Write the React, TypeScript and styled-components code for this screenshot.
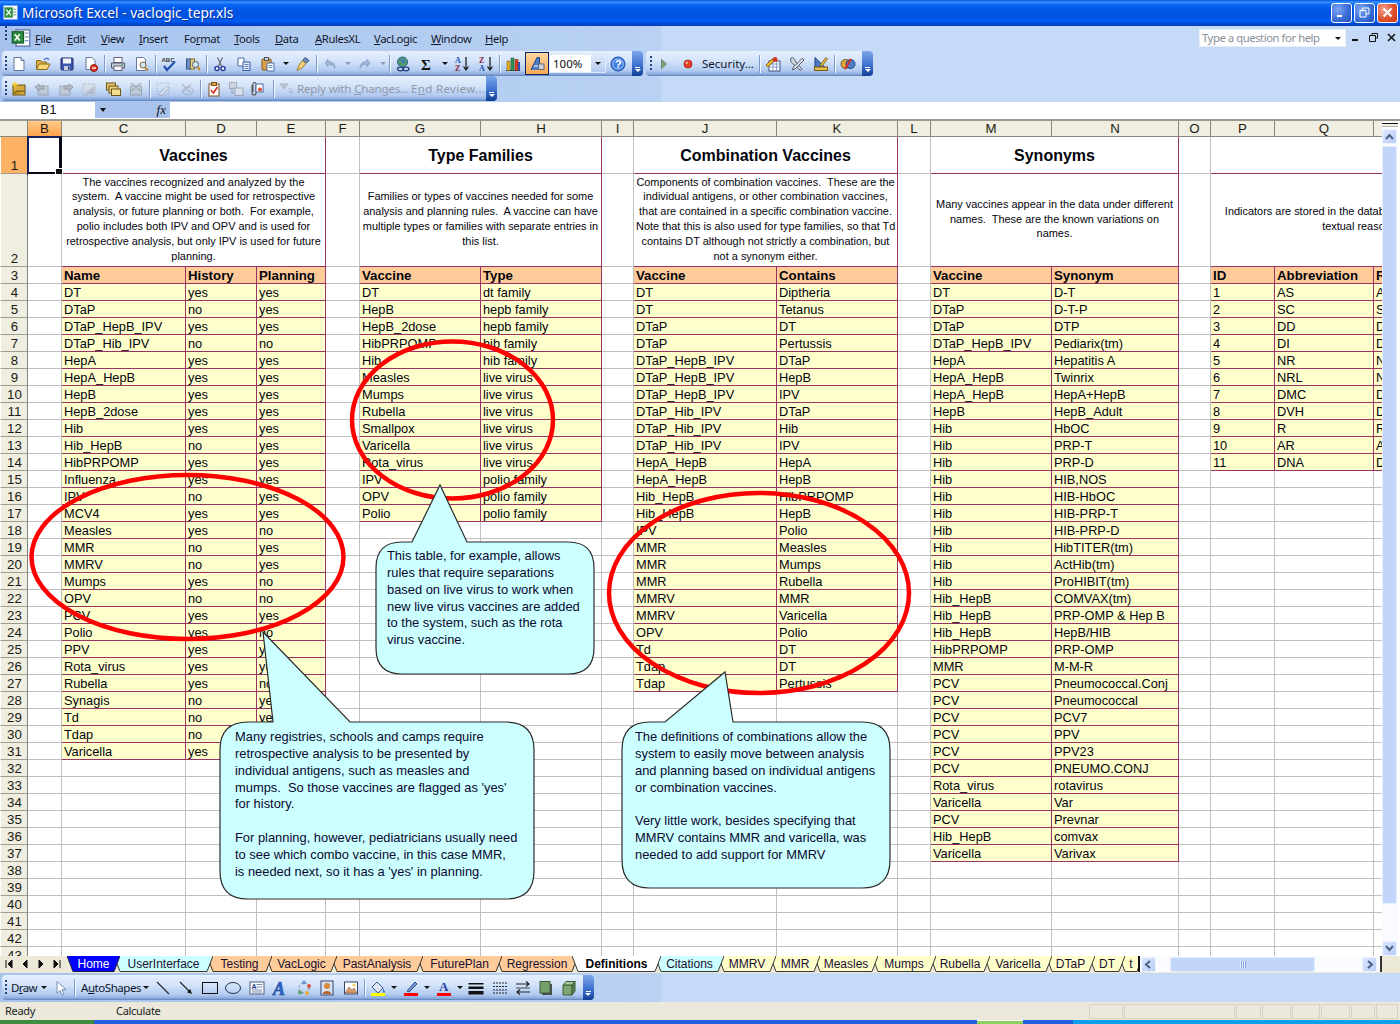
import React from 'react';
import styled, { createGlobalStyle } from 'styled-components';

const Global = createGlobalStyle`
  html, body { margin: 0; padding: 0; background: #fff; overflow: hidden; }
  * { box-sizing: border-box; }
`;

const UI = `"Noto Sans", "DejaVu Sans", sans-serif`;
const SHEET = `"Liberation Sans", Arial, sans-serif`;

const Page = styled.div`
  position: relative; width: 1400px; height: 1024px; overflow: hidden;
  display: flex; flex-direction: column; font-family: ${UI}; color: #111;
`;

/* ---------- title bar ---------- */
const TitleBar = styled.div`
  height: 26px; flex: none; display: flex; align-items: center; padding: 0 2px 1px 3px; color: #fff;
  background: linear-gradient(180deg,#0051e0 0,#3a94ff 8%,#0c6af5 16%,#0056e8 36%,#0052e0 62%,#005cf2 82%,#0048cf 92%,#003cb6 100%);
`;
const TitleText = styled.span`
  flex: 1; margin-left: 4px; font: 400 13.7px/18px "Noto Sans", sans-serif; text-shadow: 1px 1px 0 #0a2f9a;
`;
const WinBtn = styled.div<{ $red?: boolean }>`
  width: 21px; height: 20px; margin-left: 2px; border: 1px solid #fff; border-radius: 3px; display: flex; align-items: center; justify-content: center;
  background: ${p => p.$red ? 'radial-gradient(circle at 30% 30%,#f2a58e,#e0502b 55%,#c8381a)' : 'radial-gradient(circle at 30% 30%,#7ea6f2,#3c6fd8 55%,#2350bd)'};
`;

/* ---------- command bars ---------- */
const Dock = styled.div<{ $h: number }>`
  height: ${p => p.$h}px; flex: none; display: flex; align-items: flex-start;
  background: linear-gradient(90deg,#a7c3ed 0,#b9d2f3 660px,#c4daf6 662px,#c4daf6 100%);
`;
const Grip = styled.span<{ $ml?: number }>`
  flex: none; width: 2px; height: 16px; margin-left: ${p => p.$ml ?? 3}px;
  background: repeating-linear-gradient(180deg,#27437f 0 2px,transparent 2px 4px);
`;
const MenuIcon = styled.span`
  flex: none; width: 28px; height: 24px; display: flex; align-items: center; justify-content: center;
  svg { width: 20px; height: 20px; }
`;
const MenuItem = styled.span<{ $w: number }>`
  flex: none; width: ${p => p.$w}px; font: 400 11.2px/25px ${UI}; letter-spacing: -0.35px; color: #10172b;
  u { text-decoration-thickness: 1px; text-underline-offset: 1px; }
`;
const HelpBox = styled.div`
  margin-left: auto; margin-top: 3px; width: 147px; height: 18px; background: #fff; display: flex; align-items: center; justify-content: space-between;
  font: 400 11.3px/16px ${UI}; letter-spacing: -0.45px; color: #8a8f98; padding: 0 2px; white-space: nowrap;
  border: 1px solid #e8eefa;
`;
const DocCtl = styled.div`
  width: 54px; height: 22px; display: flex; align-items: center; justify-content: space-around; padding-left: 2px;
`;
const Toolbar = styled.div<{ $ml?: number; $mt?: number }>`
  flex: none; height: 25px; margin-left: ${p => p.$ml ?? 2}px; margin-top: ${p => p.$mt ?? 0}px; display: flex; align-items: center;
  border-radius: 4px; overflow: hidden; position: relative;
  background: linear-gradient(180deg,#e6f0fe 0,#d3e3f9 40%,#b3cbf1 78%,#8fadde 92%,#5c7fb9 100%);
`;
const Tool = styled.span<{ $w?: number; $off?: boolean; $on?: boolean }>`
  flex: none; width: ${p => p.$w ?? 24}px; height: 23px; display: flex; align-items: center; justify-content: center;
  ${p => p.$off && 'filter: grayscale(1) opacity(.5);'}
  ${p => p.$on && 'background: linear-gradient(180deg,#ffd9a6,#fba84e); outline: 1px solid #0a2468; outline-offset: -1px;'}
  svg { width: 16px; height: 16px; display: block; }
`;
const Sep = styled.span<{ $l?: number; $r?: number }>`
  flex: none; width: 1px; height: 18px; margin: 0 ${p => p.$r ?? 1}px 0 ${p => p.$l ?? 1}px; background: #7b9bcf; box-shadow: 1px 0 0 #f4f8ff;
`;
const Drop = styled.span<{ $w?: number; $off?: boolean }>`
  flex: none; width: ${p => p.$w ?? 11}px; display: flex; justify-content: center;
  &::before { content: ''; border: 3px solid transparent; border-top: 3px solid ${p => p.$off ? '#8a9bb8' : '#111'}; border-bottom: 0; }
`;
const Label = styled.span<{ $w?: number; $off?: boolean; $ml?: number; $ls?: number }>`
  flex: none; width: ${p => (p.$w ? p.$w + 'px' : 'auto')}; margin-left: ${p => p.$ml ?? 0}px; font: 400 11.5px/23px ${UI}; white-space: pre;
  letter-spacing: ${p => p.$ls ?? 0}px; color: ${p => p.$off ? '#8f98a8' : '#10172b'};
`;
const Chevron = styled.span<{ $ml?: number }>`
  flex: none; width: 11px; height: 25px; margin-left: ${p => p.$ml ?? 2}px; display: flex; flex-direction: column; align-items: center; justify-content: flex-end; padding-bottom: 4px; gap: 1px;
  background: linear-gradient(180deg,#7da6ea 0,#3f73cf 55%,#123f96 100%);
  i { display: block; width: 5px; height: 1px; background: #fff; }
  b { display: block; border: 3px solid transparent; border-top: 3px solid #fff; border-bottom: 0; }
`;
const ZoomBox = styled.span`
  flex: none; width: 57px; height: 19px; background: #fff; border: 1px solid #dfe8f8; display: flex; align-items: center; justify-content: space-between;
  font: 400 11.5px/17px ${UI}; color: #111; padding-left: 3px;
`;
const ZoomDrop = styled.span`
  width: 14px; height: 17px; background: linear-gradient(180deg,#dfeafc,#b3cbf1); display: flex; align-items: center; justify-content: center;
  &::before { content: ''; border: 3px solid transparent; border-top: 3px solid #111; border-bottom: 0; }
`;

/* ---------- formula bar ---------- */
const FormulaBar = styled.div`
  height: 17px; flex: none; display: flex; background: #fff;
`;
const NameBox = styled.div`
  width: 95px; height: 16px; font: 400 13.3px/16px ${SHEET}; text-align: center; padding-left: 2px; background: #fff;
`;
const NameTools = styled.div`
  width: 75px; height: 16px; background: #a9c3ed; display: flex; align-items: center; justify-content: space-between; padding: 0 4px 0 5px;
  &::before { content: ''; border: 3.5px solid transparent; border-top: 4px solid #111; border-bottom: 0; }
  em { font: italic 400 13px/16px "Liberation Serif", serif; color: #111; }
`;

/* ---------- sheet ---------- */
const SheetArea = styled.div`
  flex: 1; min-height: 0; overflow: hidden; display: flex; border-top: 2px solid #9b9a8e; background: #fff;
`;
const Clip = styled.div`
  flex: none; width: 1382px; overflow: hidden;
`;
const Table = styled.table`
  table-layout: fixed; width: 1506px; border-collapse: separate; border-spacing: 0; font-family: ${SHEET}; font-size: 12.8px; color: #04040c;
`;
const Col = styled.col<{ $w: number }>` width: ${p => p.$w}px; `;
const Tr = styled.tr<{ $h: number }>`
  height: ${p => p.$h}px;
  & > * { height: ${p => p.$h}px; }
`;
const ColHead = styled.th<{ $sel?: boolean }>`
  padding: 0; font: 400 13.3px/15px ${SHEET}; color: #1a1a14; text-align: center; vertical-align: middle;
  background: ${p => p.$sel ? 'linear-gradient(180deg,#ffc98a,#fea44b)' : '#efeee0'};
  border-right: 1px solid #87857a; border-bottom: 1px solid #87857a;
`;
const RowHead = styled.th<{ $sel?: boolean; $bottom?: boolean }>`
  padding: 0 0 0 1px; font: 400 13.3px/15px ${SHEET}; color: #1a1a14; text-align: center; vertical-align: ${p => p.$bottom ? 'bottom' : 'middle'};
  background: ${p => p.$sel ? '#fdb165' : '#efeee0'};
  border-right: 1px solid #87857a; border-bottom: 1px solid #9f9d90; border-left: 1px solid #fff;
`;
const Grid = styled.td`
  padding: 0; position: relative; border-right: 1px solid #c0c0c0; border-bottom: 1px solid #c0c0c0; background: #fff;
`;
const Boxed = styled.td`
  padding: 0 2px; overflow: hidden; white-space: nowrap; vertical-align: middle; line-height: 15px;
  border-right: 1px solid #993366; border-bottom: 1px solid #993366;
`;
const Title = styled(Boxed)`
  background: #fff; font-size: 16px; font-weight: 700; text-align: center; box-shadow: -1px 0 0 #993366;
`;
const Desc = styled(Boxed)`
  background: #fff; font-size: 10.95px; line-height: 14.8px; text-align: center; white-space: pre; padding-bottom: 2px; box-shadow: -1px 0 0 #993366;
`;
const Head = styled(Boxed)`
  background: #ffcc99; font-size: 13.25px; font-weight: 700; box-shadow: -1px 0 0 #993366;
`;
const Data = styled(Boxed)`
  background: #ffffcc; box-shadow: -1px 0 0 #993366;
`;
const Selected = styled.div`
  position: absolute; left: -1px; top: -1px; right: -1px; bottom: -2px; border: 2px solid #050a14; border-bottom-width: 3px; border-right-width: 3px; border-left-color: #14205c; border-top-color: #14205c;
  &::after { content: ''; position: absolute; right: -4px; bottom: -4px; width: 6px; height: 6px; background: #111; border: 1px solid #fff; }
`;

/* ---------- vertical scroll ---------- */
const VScroll = styled.div`
  flex: none; width: 16px; display: flex; flex-direction: column; background: #fafbff; margin-right: 2px;
`;
const Splitter = styled.div`
  height: 4px; flex: none; margin: 2px 0 2px; background: #efeee0; border-top: 1px solid #111; border-bottom: 1px solid #b8b8a8;
`;
const ScrollBtn = styled.div<{ $w?: number; $h?: number }>`
  flex: none; width: ${p => p.$w ?? 15}px; height: ${p => p.$h ?? 15}px; border-radius: 2px; border: 1px solid #eef3ff; display: flex; align-items: center; justify-content: center;
  background: linear-gradient(135deg,#dbe6fe,#b9cdf9);
  svg { width: 9px; height: 9px; }
`;
const VThumb = styled.div`
  flex: none; width: 15px; height: 758px; margin-top: 2px; border-radius: 2px; background: #c4d5fb; border: 1px solid #e6edfd;
`;
const Track = styled.div<{ $w?: number }>`
  ${p => p.$w ? `flex: none; width: ${p.$w}px; height: 100%;` : 'flex: 1;'}
`;

/* ---------- tab strip ---------- */
const TabBar = styled.div`
  flex: none; height: 17px; display: flex; background: #ece9d8; position: relative;
`;
const Nav = styled.div`
  flex: none; width: 67px; height: 16px; display: flex; align-items: center; padding-left: 1px;
  svg { width: 16px; height: 12px; }
`;
const Tabs = styled.div`
  flex: none; width: 1071px; height: 17px; display: flex; overflow: hidden;
`;
const Tab = styled.div<{ $w: number; $z: number }>`
  position: relative; flex: none; width: ${p => p.$w}px; height: 16px; margin-right: -6px; z-index: ${p => p.$z};
  svg { position: absolute; inset: 0; width: 100%; height: 100%; }
`;
const TabLabel = styled.span<{ $c?: string; $bold?: boolean }>`
  position: relative; display: block; text-align: center; font: ${p => p.$bold ? 700 : 400} 12px/16px ${SHEET}; color: ${p => p.$c ?? '#1a1030'};
`;
const HScroll = styled.div`
  flex: 1; display: flex; align-items: center; height: 16px; background: #fafbff; border-left: 2px solid #111; padding-left: 1px;
`;
const HThumb = styled.div`
  flex: none; width: 145px; height: 15px; border-radius: 2px; background: #c4d5fb; border: 1px solid #e6edfd; display: flex; align-items: center; justify-content: center;
  i { width: 6px; height: 7px; background: repeating-linear-gradient(90deg,#e9f0ff 0 1px,#8ba4d8 1px 2px); }
`;
const HTail = styled.div`
  flex: none; width: 22px; height: 16px; margin-left: 3px; background: #ece9d8; border-left: 2px solid #333;
`;

/* ---------- status ---------- */
const StatusBar = styled.div`
  flex: none; height: 18px; background: #ece9dc; display: flex; align-items: center; font: 400 11px/18px ${UI}; letter-spacing: -0.3px; color: #222;
`;
const StatusText = styled.span<{ $w: number }>`
  flex: none; width: ${p => p.$w}px; padding-left: 5px;
`;
const Panel = styled.span<{ $w: number }>`
  flex: none; width: ${p => p.$w}px; height: 15px; margin-right: 1px; border: 1px solid #d6d3c2;
`;
const Panels = styled.div`
  margin-left: auto; margin-right: 1px; display: flex; align-items: center;
`;
const Taskbar = styled.div`
  flex: none; height: 4px; display: flex;
`;
const Seg = styled.div<{ $w?: number; $c: string; $line?: boolean }>`
  ${p => p.$w ? `flex: none; width: ${p.$w}px;` : 'flex: 1;'} background: ${p => p.$c}; ${p => p.$line && 'border-top: 1px solid #fff;'}
`;

/* ---------- drawn objects over the sheet ---------- */
const Marks = styled.svg`
  position: absolute; left: 0; top: 0; width: 1400px; height: 1024px; pointer-events: none;
`;
const Note = styled.div<{ $x: number; $y: number }>`
  position: absolute; left: ${p => p.$x}px; top: ${p => p.$y}px; white-space: pre;
  font: 400 12.9px/16.85px ${SHEET}; color: #0a0830;
`;

/* ---------- icons ---------- */
const icons: Record<string, React.ReactNode> = {
  sheetdoc: <><rect x="4" y="1.5" width="11" height="13" fill="#fff" stroke="#5570a8"/><rect x="1" y="3" width="9" height="9" fill="#2e8b3f" stroke="#15602a"/><path d="M3 5l4 5M7 5l-4 5" stroke="#fff" strokeWidth="1.2"/><path d="M11 4h3M11 7h3M11 10h3" stroke="#7f99cc"/></>,
  xl: <><rect x="1" y="1" width="14" height="14" fill="#fff" stroke="#dfe7f5"/><rect x="1.5" y="2.5" width="9" height="11" fill="#2e8b3f"/><path d="M3.5 5l5 6M8.5 5l-5 6" stroke="#fff" strokeWidth="1.3"/><path d="M11 4.5h3M11 7.5h3M11 10.5h3" stroke="#5f8a66"/></>,
  new: <><path d="M3 1.5h7l3 3v10H3z" fill="#fff" stroke="#65769a"/><path d="M10 1.5v3h3" fill="#d5e0f3" stroke="#65769a"/></>,
  open: <><path d="M1.5 13V4.5h4l1 1.5h5V13z" fill="#e4b043" stroke="#8a6a1c"/><path d="M1.5 13.5L4 8h11l-3 5.5z" fill="#fbd775" stroke="#8a6a1c"/><path d="M9 4c1.500-2 3.500-2 5-.5" fill="none" stroke="#3a6fd0" strokeWidth="1.2"/></>,
  save: <><rect x="2" y="2" width="12" height="12" rx="1" fill="#3f56b0" stroke="#1d2a6a"/><rect x="4" y="2.500" width="8" height="5" fill="#f4f6fc"/><rect x="5" y="10" width="6" height="4" fill="#c7cfe3"/><rect x="9" y="10.500" width="1.500" height="3" fill="#1d2a6a"/></>,
  perm: <><path d="M3 1.500h6l3 3v9H3z" fill="#fff" stroke="#65769a"/><circle cx="11" cy="12" r="3.500" fill="#e03020" stroke="#901810"/><rect x="9" y="11.300" width="4" height="1.400" fill="#fff"/></>,
  print: <><rect x="4" y="1.500" width="8" height="5" fill="#fff" stroke="#667"/><path d="M1.500 7h13v5h-13z" fill="#c3ccd6" stroke="#556"/><rect x="4" y="10" width="8" height="4.500" fill="#f4f6fa" stroke="#667"/><rect x="11.500" y="8" width="1.500" height="1" fill="#2a9d4a"/></>,
  preview: <><path d="M2.500 1.500h7l2 2v11h-9z" fill="#fff" stroke="#65769a"/><circle cx="9" cy="9" r="3" fill="#cfe6f8" stroke="#7a6a3a"/><path d="M11 11.500l3 3" stroke="#c08a28" strokeWidth="2"/></>,
  spell: <><text x="0.5" y="6" fontSize="6" fontWeight="700" fontFamily="Liberation Sans" fill="#333">ABC</text><path d="M3 10l3 4 8-8.500" fill="none" stroke="#2350b0" strokeWidth="2.200"/></>,
  research: <><rect x="1.500" y="3" width="4" height="10" fill="#6d8fc7" stroke="#33507f"/><rect x="5.500" y="3" width="4" height="10" fill="#e7cf8c" stroke="#7d6a30"/><circle cx="10.500" cy="8.500" r="3" fill="#d3ebf9" stroke="#555"/><path d="M12.500 11l2.500 3" stroke="#c08a28" strokeWidth="2"/></>,
  cut: <><path d="M5.500 1.500l4 8.500M10.500 1.500l-4 8.500" stroke="#667" strokeWidth="1.200"/><circle cx="5" cy="12.500" r="2" fill="#fff" stroke="#2a3f9a" strokeWidth="1.500"/><circle cx="11" cy="12.500" r="2" fill="#fff" stroke="#2a3f9a" strokeWidth="1.500"/></>,
  copy: <><path d="M2 2h6v8H2z" fill="#fff" stroke="#4a6aa8"/><path d="M7 6h7v8.500H7z" fill="#eaf1fc" stroke="#2f56a8"/><path d="M8.500 8.500h4M8.500 10.500h4M8.500 12.500h4" stroke="#5f7fc0"/></>,
  paste: <><rect x="2" y="3" width="9" height="11" rx="1" fill="#d9a24a" stroke="#7a5616"/><rect x="4.500" y="1.500" width="4" height="3" fill="#cfd5de" stroke="#555"/><path d="M7 7h7v8H7z" fill="#fff" stroke="#4a6aa8"/><path d="M8.500 9.500h4M8.500 11.500h4" stroke="#6a88c0"/></>,
  painter: <><path d="M10 1.500l4 3-3 3-3.500-3z" fill="#6e8fc2" stroke="#3c517e"/><path d="M7.500 4.500L11 7.500 7 12 2 14.500 4 9z" fill="#f3d27c" stroke="#9a7a2c"/></>,
  undo: <><path d="M3 7l3-4v2.500c4 0 7 1.500 7 7-1-3-3-4-7-4V11z" fill="#9db2d6" stroke="#7f97c0" strokeWidth=".6"/></>,
  redo: <><path d="M13 7l-3-4v2.500c-4 0-7 1.500-7 7 1-3 3-4 7-4V11z" fill="#9db2d6" stroke="#7f97c0" strokeWidth=".6"/></>,
  link: <><circle cx="7.500" cy="6" r="5" fill="#4f9c6a" stroke="#2d5f95"/><path d="M4 4l3 1 1 3 2-2-1-3" fill="#3f77c8"/><ellipse cx="5.500" cy="13" rx="3" ry="1.800" fill="none" stroke="#28407f" strokeWidth="1.300"/><ellipse cx="11" cy="13" rx="3" ry="1.800" fill="none" stroke="#28407f" strokeWidth="1.300"/></>,
  sigma: <text x="2" y="13.500" fontSize="15" fontWeight="700" fontFamily="Liberation Serif" fill="#111">Σ</text>,
  az: <><text x="1" y="7" fontSize="8" fontWeight="700" fontFamily="Liberation Serif" fill="#2050b0">A</text><text x="1" y="15" fontSize="8" fontWeight="700" fontFamily="Liberation Serif" fill="#8a1f3a">Z</text><path d="M12 1v12M9.500 10.500L12 14l2.500-3.500" fill="none" stroke="#111" strokeWidth="1.200"/></>,
  za: <><text x="1" y="7" fontSize="8" fontWeight="700" fontFamily="Liberation Serif" fill="#8a1f3a">Z</text><text x="1" y="15" fontSize="8" fontWeight="700" fontFamily="Liberation Serif" fill="#2050b0">A</text><path d="M12 1v12M9.500 10.500L12 14l2.500-3.500" fill="none" stroke="#111" strokeWidth="1.200"/></>,
  chart: <><path d="M1 14.500h14" stroke="#333"/><rect x="2" y="5" width="3" height="9.500" fill="#e8b020" stroke="#6a5010" strokeWidth=".5"/><rect x="6" y="2" width="3" height="12.500" fill="#2f8f4f" stroke="#1a5a30" strokeWidth=".5"/><rect x="10" y="3.500" width="3" height="11" fill="#d8401f" stroke="#7a2010" strokeWidth=".5"/><rect x="13" y="6" width="2" height="8.500" fill="#2a4fb0"/></>,
  drawing: <><path d="M2 14L8 1.500h2.500V14" fill="#4d7fcb" stroke="#1f3f88"/><path d="M5 10h5" stroke="#fff"/><rect x="9.500" y="8" width="5.500" height="5.500" fill="#cfd6e2" stroke="#667"/></>,
  help: <><circle cx="8" cy="8" r="7" fill="#3f7fe0" stroke="#1c4ba8"/><circle cx="8" cy="8" r="5.200" fill="none" stroke="#cfe1ff" strokeWidth=".7"/><text x="5" y="12" fontSize="11" fontWeight="700" fontFamily="Liberation Sans" fill="#fff">?</text></>,
  play: <path d="M5.500 3.500l5 4.500-5 4.500z" fill="#7d9f7a" stroke="#6b8a68"/>,
  rec: <><circle cx="8" cy="8" r="4" fill="#e8432a" stroke="#b0301c"/><circle cx="6.800" cy="6.800" r="1.200" fill="#f7b09f"/></>,
  sec1: <><rect x="4" y="5" width="11" height="10" fill="#fff" stroke="#3d4d82"/><path d="M4 8h11M4 11h11M8 5v10M11.500 5v10" stroke="#8aa0cf"/><path d="M1 9l6-6 2 2-6 6z" fill="#e8b83a" stroke="#8a6a1c"/><circle cx="10" cy="3.500" r="2.500" fill="#d03a20"/></>,
  tools: <><path d="M2 2c2-1 4 1 4 3l7 8-1.500 1.500-8-7C2 7 1 4.500 2 2z" fill="#cfd5de" stroke="#5a6070"/><path d="M13.500 2l-9 9-1.500 3 3-1 9-9z" fill="#d9e0ea" stroke="#5a6070"/></>,
  ruler: <><path d="M2 1.500v10h10z" fill="#4b79c8" stroke="#1f3f88"/><rect x="1.500" y="11" width="13" height="3.500" fill="#e8c050" stroke="#7a5a10"/><path d="M7 9l6-7.500 1.500 1.500L9 10z" fill="#f0c050" stroke="#8a6a1c"/></>,
  vac: <><circle cx="5.500" cy="8" r="4.500" fill="#e0a838" stroke="#665a2a"/><circle cx="10.500" cy="8" r="4.500" fill="#4d7fcb" stroke="#1f3f88"/><path d="M5 13L11 3" stroke="#d83020" strokeWidth="2"/></>,
  comment: <><rect x="2" y="4" width="12" height="10" fill="#d5a93c" stroke="#6d5516"/><path d="M2 14l3-4h9" fill="#b08820" stroke="#6d5516"/><path d="M4 .5v6M1 3.500h6M2 1.500l4 4M6 1.500l-4 4" stroke="#f6d22a" strokeWidth="1"/></>,
  cback: <><rect x="4" y="5" width="10" height="9" fill="#a6c0e6" stroke="#5a7aa8"/><path d="M1 6l4-3v2h5v3H5v2z" fill="#6f9ad6" stroke="#3a5a9a"/></>,
  cfwd: <><rect x="2" y="5" width="10" height="9" fill="#a6c0e6" stroke="#5a7aa8"/><path d="M15 6l-4-3v2H6v3h5v2z" fill="#6f9ad6" stroke="#3a5a9a"/></>,
  chide: <><rect x="2" y="3" width="12" height="11" fill="#cddcf2" stroke="#7a8fb8" strokeDasharray="1.500 1"/><path d="M3 13L13 5v8z" fill="#98a8c2"/></>,
  cmany: <><rect x="1.500" y="2" width="9" height="7" fill="#e8c870" stroke="#6d5516"/><rect x="4" y="5" width="9" height="7" fill="#eed27c" stroke="#6d5516"/><rect x="6.500" y="8" width="9" height="6.500" fill="#f3dc8f" stroke="#6d5516"/></>,
  cdel: <><rect x="2.500" y="5" width="11" height="9" fill="#a6c0e6" stroke="#5a7aa8"/><path d="M3 2l10 8M13 2L3 10" stroke="#6c7d9a" strokeWidth="1.500"/></>,
  ink: <><rect x="2" y="2" width="12" height="12" fill="none" stroke="#7a8fb8" strokeDasharray="1.500 1.500"/><path d="M4 13l8-8 2 2-8 8z" fill="#e6e9f0" stroke="#8a96ac"/></>,
  inkdel: <><path d="M3 3l9 9M12 3l-9 9" stroke="#8a96ac" strokeWidth="1.500"/><ellipse cx="9" cy="10" rx="5" ry="4" fill="none" stroke="#8a96ac"/></>,
  track: <><rect x="3" y="3" width="10" height="12" fill="#fff" stroke="#7a4a20"/><rect x="5.500" y="1.500" width="5" height="3" fill="#d9a24a" stroke="#7a5616"/><path d="M5 9l2.500 3 4-6" fill="none" stroke="#d03020" strokeWidth="1.600"/></>,
  merge: <><rect x="1.500" y="1.500" width="7" height="6" fill="#b6c6de" stroke="#5a7aa8"/><rect x="7" y="7" width="8" height="7.500" fill="#e4ecf8" stroke="#5a7aa8"/><path d="M4 8v4h2" fill="none" stroke="#3a5a9a"/></>,
  clip: <><path d="M6 4v8a2 2 0 004 0V3a1.500 1.500 0 00-3 0v8" fill="none" stroke="#555" strokeWidth="1.100" transform="translate(-2 0)"/><rect x="8" y="3" width="7" height="8" fill="#fff" stroke="#4a6aa8"/><circle cx="12" cy="8.500" r="2" fill="#d85030"/></>,
  reply: <><path d="M1 3l4 5 4-5z" fill="#9aa3b0" stroke="#7a8596"/><path d="M9 7c3 0 5 2 4 5l-3-2" fill="none" stroke="#8aa0bf" strokeWidth="1.200"/></>,
  cursor: <path d="M4 1.500v12l3-3 2 4.500 2-1-2-4.500h4z" fill="#fff" stroke="#7a8fb0"/>,
  line: <path d="M2 2l12 12" stroke="#222" strokeWidth="1.100"/>,
  arrow: <><path d="M2 2l10 10" stroke="#222" strokeWidth="1.100"/><path d="M14 14l-5-1.800 3.200-3.200z" fill="#111"/></>,
  rect: <rect x="0.500" y="2.500" width="15" height="11" fill="none" stroke="#111"/>,
  ellipse: <ellipse cx="8" cy="8" rx="7.500" ry="5.500" fill="none" stroke="#2a3340"/>,
  textbox: <><rect x="1" y="2" width="14" height="12" fill="#fff" stroke="#4a5a80"/><text x="2.500" y="8.500" fontSize="7" fontWeight="700" fontFamily="Liberation Sans" fill="#223a88">A</text><path d="M7.500 4.500h6M7.500 7h6M3 10h10M3 12h10" stroke="#7b8cb0"/></>,
  wordart: <text x="1" y="15" fontSize="18" fontWeight="700" fontStyle="italic" fontFamily="Liberation Serif" fill="#2f6bd0" stroke="#123a8a" strokeWidth=".5">A</text>,
  diagram: <><circle cx="8" cy="8" r="5" fill="none" stroke="#6a7a90" strokeDasharray="2 2"/><circle cx="8" cy="2.500" r="2" fill="#6f9ad6"/><circle cx="13" cy="6" r="2" fill="#d9503a"/><circle cx="11" cy="13" r="2" fill="#e6b030"/><circle cx="4" cy="12.500" r="2" fill="#5aa060"/></>,
  clipart: <><rect x="2" y="1" width="12" height="14" fill="#d8e2f2" stroke="#33476f"/><circle cx="8" cy="6" r="3" fill="#d88a3a"/><path d="M3.500 14c1-4 8-4 9 0z" fill="#b5602a"/></>,
  picture: <><rect x="1.500" y="2" width="13" height="12" fill="#fff" stroke="#33476f"/><path d="M2 13l4-6 3 3 2-2 3 5z" fill="#d89a6a" stroke="#7a4a2a" strokeWidth=".5"/><circle cx="11" cy="5" r="1.500" fill="#f0c84a"/></>,
  fill: <><path d="M7 2l6 6-5 5-6-6z" fill="#dfe6f2" stroke="#3a5aa0"/><path d="M13 8c1 2 2 3 2 4s-2 1-2 0 0-2 0-4z" fill="#3a6fd0"/><rect x="1" y="13" width="14" height="3" fill="#ffff00"/></>,
  linecolor: <><path d="M4 11L12 2l2 2-8 8z" fill="#6f9ad6" stroke="#2a4a90"/><rect x="1" y="13" width="14" height="3" fill="#ff0000"/></>,
  fontcolor: <><text x="3" y="11" fontSize="13" fontWeight="700" fontFamily="Liberation Serif" fill="#1f3f9a">A</text><rect x="1" y="13" width="14" height="3" fill="#ff0000"/></>,
  linestyle: <><rect x="0.500" y="3" width="15" height="1.500" fill="#111"/><rect x="0.500" y="6.500" width="15" height="2.500" fill="#111"/><rect x="0.500" y="11" width="15" height="3.500" fill="#111"/></>,
  dash: <path d="M1 3h14M1 6.500h14M1 10h14M1 13h14" stroke="#222" strokeDasharray="2 1"/>,
  arrows: <><path d="M1 4h13M11 1.500L14 4l-3 2.500M15 12H2M5 9.500L2 12l3 2.500" fill="none" stroke="#222" strokeWidth="1.200"/><path d="M1 8h14" stroke="#222" strokeWidth=".8"/></>,
  shadow: <><rect x="4" y="4" width="10" height="11" fill="#222" opacity=".75"/><rect x="2" y="1.500" width="10" height="11.500" fill="#74a06a" stroke="#3a5a38"/></>,
  threeD: <><path d="M2 5h9v10H2z" fill="#7ea673" stroke="#3a5a38"/><path d="M2 5l3-3.500h9L11 5z" fill="#a8c89e" stroke="#3a5a38"/><path d="M11 5l3-3.500V11l-3 4z" fill="#5c8452" stroke="#3a5a38"/></>,
};
const Ico = ({ n }: { n: string }) => <svg viewBox="0 0 16 16">{icons[n]}</svg>;

const Chev = ({ ml }: { ml?: number }) => <Chevron $ml={ml}><i /><b /></Chevron>;

/* ---------- data ---------- */
const widths = [28, 34, 124, 71, 69, 34, 121, 121, 32, 143, 121, 33, 121, 127, 32, 64, 99, 132];
const letters = 'BCDEFGHIJKLMNOPQR'.split('');

const rowsOf = (cols: string, list: string[][]) => {
  const out: Record<string, string[]> = {};
  cols.split('').forEach((c, i) => { out[c] = list.map(r => r[i]); });
  return out;
};
const vaccines = `DT yes yes|DTaP no yes|DTaP_HepB_IPV yes yes|DTaP_Hib_IPV no no|HepA yes yes|HepA_HepB yes yes|HepB yes yes|HepB_2dose yes yes|Hib yes yes|Hib_HepB no yes|HibPRPOMP yes yes|Influenza yes yes|IPV no yes|MCV4 yes yes|Measles yes no|MMR no yes|MMRV no yes|Mumps yes no|OPV no no|PCV yes yes|Polio yes no|PPV yes yes|Rota_virus yes yes|Rubella yes no|Synagis no yes|Td no yes|Tdap no yes|Varicella yes yes`.split('|').map(s => s.split(' '));
const families = [['DT','dt family'],['HepB','hepb family'],['HepB_2dose','hepb family'],['HibPRPOMP','hib family'],['Hib','hib family'],['Measles','live virus'],['Mumps','live virus'],['Rubella','live virus'],['Smallpox','live virus'],['Varicella','live virus'],['Rota_virus','live virus'],['IPV','polio family'],['OPV','polio family'],['Polio','polio family']];
const combos = [['DT','Diptheria'],['DT','Tetanus'],['DTaP','DT'],['DTaP','Pertussis'],['DTaP_HepB_IPV','DTaP'],['DTaP_HepB_IPV','HepB'],['DTaP_HepB_IPV','IPV'],['DTaP_Hib_IPV','DTaP'],['DTaP_Hib_IPV','Hib'],['DTaP_Hib_IPV','IPV'],['HepA_HepB','HepA'],['HepA_HepB','HepB'],['Hib_HepB','HibPRPOMP'],['Hib_HepB','HepB'],['IPV','Polio'],['MMR','Measles'],['MMR','Mumps'],['MMR','Rubella'],['MMRV','MMR'],['MMRV','Varicella'],['OPV','Polio'],['Td','DT'],['Tdap','DT'],['Tdap','Pertussis']];
const synonyms = [['DT','D-T'],['DTaP','D-T-P'],['DTaP','DTP'],['DTaP_HepB_IPV','Pediarix(tm)'],['HepA','Hepatitis A'],['HepA_HepB','Twinrix'],['HepA_HepB','HepA+HepB'],['HepB','HepB_Adult'],['Hib','HbOC'],['Hib','PRP-T'],['Hib','PRP-D'],['Hib','HIB,NOS'],['Hib','HIB-HbOC'],['Hib','HIB-PRP-T'],['Hib','HIB-PRP-D'],['Hib','HibTITER(tm)'],['Hib','ActHib(tm)'],['Hib','ProHIBIT(tm)'],['Hib_HepB','COMVAX(tm)'],['Hib_HepB','PRP-OMP & Hep B'],['Hib_HepB','HepB/HIB'],['HibPRPOMP','PRP-OMP'],['MMR','M-M-R'],['PCV','Pneumococcal.Conj'],['PCV','Pneumococcal'],['PCV','PCV7'],['PCV','PPV'],['PCV','PPV23'],['PCV','PNEUMO.CONJ'],['Rota_virus','rotavirus'],['Varicella','Var'],['PCV','Prevnar'],['Hib_HepB','comvax'],['Varicella','Varivax']];
const indicators = [['1','AS','A'],['2','SC','S'],['3','DD','D'],['4','DI','D'],['5','NR','N'],['6','NRL','N'],['7','DMC','D'],['8','DVH','D'],['9','R','R'],['10','AR','A'],['11','DNA','D']];
const data: Record<string, string[]> = {
  ...rowsOf('CDE', vaccines), ...rowsOf('GH', families), ...rowsOf('JK', combos), ...rowsOf('MN', synonyms), ...rowsOf('PQR', indicators),
};
const heads: Record<string, string> = { C: 'Name', D: 'History', E: 'Planning', G: 'Vaccine', H: 'Type', J: 'Vaccine', K: 'Contains', M: 'Vaccine', N: 'Synonym', P: 'ID', Q: 'Abbreviation', R: 'R' };
const blocks = [
  { at: 'C', span: 3, title: 'Vaccines', desc: 'The vaccines recognized and analyzed by the\nsystem.  A vaccine might be used for retrospective\nanalysis, or future planning or both.  For example,\npolio includes both IPV and OPV and is used for\nretrospective analysis, but only IPV is used for future\nplanning.' },
  { at: 'G', span: 2, title: 'Type Families', desc: 'Families or types of vaccines needed for some\nanalysis and planning rules.  A vaccine can have\nmultiple types or families with separate entries in\nthis list.' },
  { at: 'J', span: 2, title: 'Combination Vaccines', desc: 'Components of combination vaccines.  These are the\nindividual antigens, or other combination vaccines,\nthat are contained in a specific combination vaccine.\nNote that this is also used for type families, so that Td\ncontains DT although not strictly a combination, but\nnot a synonym either.' },
  { at: 'M', span: 2, title: 'Synonyms', desc: 'Many vaccines appear in the data under different\nnames.  These are the known variations on\nnames.' },
  { at: 'P', span: 3, title: '', desc: 'Indicators are stored in the database along with a short\ntextual reason.' },
];

const spanRow = (kind: 'title' | 'desc') => {
  const cells: React.ReactNode[] = [];
  for (let i = 0; i < letters.length; i++) {
    const c = letters[i];
    const b = blocks.find(x => x.at === c);
    if (b) {
      cells.push(kind === 'title' ? <Title key={c} colSpan={b.span}>{b.title}</Title> : <Desc key={c} colSpan={b.span}>{b.desc}</Desc>);
      i += b.span - 1;
    } else if (c === 'B' && kind === 'title') {
      cells.push(<Grid key={c}><Selected /></Grid>);
    } else {
      cells.push(<Grid key={c} />);
    }
  }
  return cells;
};

const rowNums = Array.from({ length: 40 }, (_, i) => i + 4);

const tabs: { n: string; f: string; c?: string; w: number; bold?: boolean }[] = [
  { n: 'Home', f: '#0000ff', c: '#fff', w: 53 },
  { n: 'UserInterface', f: '#ccffff', w: 99 },
  { n: 'Testing', f: '#ffcc99', w: 65 },
  { n: 'VacLogic', f: '#ffcc99', w: 71 },
  { n: 'PastAnalysis', f: '#ffcc99', w: 92 },
  { n: 'FuturePlan', f: '#ffcc99', w: 85 },
  { n: 'Regression', f: '#ffcc99', w: 82 },
  { n: 'Definitions', f: '#ffffff', c: '#000', w: 89, bold: true },
  { n: 'Citations', f: '#ccffff', w: 69 },
  { n: 'MMRV', f: '#ffffcc', w: 58 },
  { n: 'MMR', f: '#ffffcc', w: 50 },
  { n: 'Measles', f: '#ffffcc', w: 64 },
  { n: 'Mumps', f: '#ffffcc', w: 64 },
  { n: 'Rubella', f: '#ffffcc', w: 60 },
  { n: 'Varicella', f: '#ffffcc', w: 68 },
  { n: 'DTaP', f: '#ffffcc', w: 49 },
  { n: 'DT', f: '#ffffcc', w: 36 },
  { n: 't', f: '#ffffcc', w: 24 },
];

const menu: [string, number][] = [['File', 32], ['Edit', 34], ['View', 38], ['Insert', 45], ['Format', 50], ['Tools', 41], ['Data', 40], ['ARulesXL', 59], ['VacLogic', 57], ['Window', 54], ['Help', 40]];
const under = (s: string) => {
  const i = s === 'Format' ? 2 : 0;
  return <>{s.slice(0, i)}<u>{s[i]}</u>{s.slice(i + 1)}</>;
};

const oval = (cx: number, cy: number, rx: number, ry: number) => (
  <ellipse cx={cx} cy={cy} rx={rx} ry={ry} fill="none" stroke="#ff0000" strokeWidth="4.5" />
);
const bubble = (x: number, y: number, w: number, h: number, r: number, tx: number, ty: number, b1: number, b2: number) =>
  `M${x + r} ${y}L${b1} ${y}L${tx} ${ty}L${b2} ${y}L${x + w - r} ${y}Q${x + w} ${y} ${x + w} ${y + r}L${x + w} ${y + h - r}Q${x + w} ${y + h} ${x + w - r} ${y + h}L${x + r} ${y + h}Q${x} ${y + h} ${x} ${y + h - r}L${x} ${y + r}Q${x} ${y} ${x + r} ${y}Z`;
const Bubble = ({ d }: { d: string }) => <path d={d} fill="#ccffff" stroke="#2a2a2a" strokeWidth="1.200" />;

const Arrow = ({ dir }: { dir: string }) => {
  const d = { up: 'M1 7l3.500-4L8 7', down: 'M1 2l3.500 4L8 2', left: 'M6 1L2 4.500 6 8', right: 'M3 1l4 3.500L3 8' }[dir];
  return <svg viewBox="0 0 9 9"><path d={d} fill="none" stroke="#4d6185" strokeWidth="2" /></svg>;
};

export default function App() {
  return (
    <Page>
      <Global />
      <TitleBar>
        <svg width="15" height="15" viewBox="0 0 16 16">{icons.xl}</svg>
        <TitleText>Microsoft Excel - vaclogic_tepr.xls</TitleText>
        <WinBtn><svg width="11" height="11" viewBox="0 0 11 11"><rect x="1" y="8" width="5" height="2" fill="#fff" /></svg></WinBtn>
        <WinBtn><svg width="11" height="11" viewBox="0 0 11 11"><path d="M3.500 3.500V1h6.500v6H7M1 3.500h6v6.500H1z" fill="none" stroke="#fff" /></svg></WinBtn>
        <WinBtn $red><svg width="11" height="11" viewBox="0 0 11 11"><path d="M1.500 1.500l8 8M9.500 1.500l-8 8" stroke="#fff" strokeWidth="2" /></svg></WinBtn>
      </TitleBar>

      <Dock $h={25}>
        <Grip $ml={5} />
        <MenuIcon><Ico n="sheetdoc" /></MenuIcon>
        {menu.map(([m, w]) => <MenuItem key={m} $w={w}>{under(m)}</MenuItem>)}
        <HelpBox>Type a question for help<Drop /></HelpBox>
        <DocCtl>
          <svg width="8" height="8" viewBox="0 0 8 8"><rect x="0" y="6" width="6" height="2" fill="#111" /></svg>
          <svg width="9" height="9" viewBox="0 0 9 9"><path d="M3 2.500V.500h5.500v4.500H6.500M.500 2.500h6v6h-6z" fill="none" stroke="#111" /></svg>
          <svg width="9" height="9" viewBox="0 0 9 9"><path d="M1 1l7 7M8 1L1 8" stroke="#111" strokeWidth="1.500" /></svg>
        </DocCtl>
      </Dock>

      <Dock $h={25}>
        <Toolbar>
          <Grip />
          <Tool><Ico n="new" /></Tool><Tool><Ico n="open" /></Tool><Tool><Ico n="save" /></Tool><Tool><Ico n="perm" /></Tool>
          <Sep />
          <Tool><Ico n="print" /></Tool><Tool><Ico n="preview" /></Tool>
          <Sep />
          <Tool><Ico n="spell" /></Tool><Tool><Ico n="research" /></Tool>
          <Sep />
          <Tool><Ico n="cut" /></Tool><Tool><Ico n="copy" /></Tool><Tool><Ico n="paste" /></Tool><Drop /><Tool><Ico n="painter" /></Tool>
          <Sep />
          <Tool><Ico n="undo" /></Tool><Drop $off /><Tool><Ico n="redo" /></Tool><Drop $off />
          <Sep />
          <Tool><Ico n="link" /></Tool><Tool><Ico n="sigma" /></Tool><Drop /><Tool><Ico n="az" /></Tool><Tool><Ico n="za" /></Tool>
          <Sep />
          <Tool><Ico n="chart" /></Tool><Tool $on><Ico n="drawing" /></Tool>
          <ZoomBox>100%<ZoomDrop /></ZoomBox>
          <Tool><Ico n="help" /></Tool>
          <Chev />
        </Toolbar>
        <Toolbar $ml={3}>
          <Grip $ml={4} />
          <Tool><Ico n="play" /></Tool><Tool><Ico n="rec" /></Tool>
          <Label $ml={2} $w={56}>Security...</Label>
          <Sep />
          <Tool><Ico n="sec1" /></Tool><Tool><Ico n="tools" /></Tool><Tool><Ico n="ruler" /></Tool>
          <Sep />
          <Tool><Ico n="vac" /></Tool>
          <Chev />
        </Toolbar>
      </Dock>

      <Dock $h={26}>
        <Toolbar>
          <Grip />
          <Tool $w={23.5}><Ico n="comment" /></Tool>
          <Tool $w={23.5} $off><Ico n="cback" /></Tool><Tool $w={23.5} $off><Ico n="cfwd" /></Tool><Tool $w={23.5} $off><Ico n="chide" /></Tool>
          <Tool $w={23.5}><Ico n="cmany" /></Tool><Tool $w={23.5} $off><Ico n="cdel" /></Tool>
          <Sep />
          <Tool $off><Ico n="ink" /></Tool><Tool $off><Ico n="inkdel" /></Tool>
          <Sep />
          <Tool><Ico n="track" /></Tool><Tool $w={20} $off><Ico n="merge" /></Tool><Tool $w={20}><Ico n="clip" /></Tool>
          <Sep $l={7} $r={3} />
          <Tool $w={20} $off><Ico n="reply" /></Tool>
          <Label $off $w={114} $ls={-0.15}><>Reply with <u>C</u>hanges...</></Label>
          <Label $off $w={69} $ls={0.35}><>E<u>n</u>d Review...</></Label>
          <Chev ml={6} />
        </Toolbar>
      </Dock>

      <FormulaBar>
        <NameBox>B1</NameBox>
        <NameTools><em>fx</em></NameTools>
      </FormulaBar>

      <SheetArea>
        <Clip>
          <Table>
            <colgroup>{widths.map((w, i) => <Col key={i} $w={w} />)}</colgroup>
            <tbody>
              <Tr $h={16}>
                <ColHead />
                {letters.map(c => <ColHead key={c} $sel={c === 'B'}>{c}</ColHead>)}
              </Tr>
              <Tr $h={37}><RowHead $sel $bottom>1</RowHead>{spanRow('title')}</Tr>
              <Tr $h={93}><RowHead $bottom>2</RowHead>{spanRow('desc')}</Tr>
              <Tr $h={17}>
                <RowHead>3</RowHead>
                {letters.map(c => heads[c] ? <Head key={c}>{heads[c]}</Head> : <Grid key={c} />)}
              </Tr>
              {rowNums.map(r => (
                <Tr key={r} $h={17}>
                  <RowHead>{r}</RowHead>
                  {letters.map(c => {
                    const v = data[c]?.[r - 4];
                    return v !== undefined ? <Data key={c}>{v}</Data> : <Grid key={c} />;
                  })}
                </Tr>
              ))}
            </tbody>
          </Table>
        </Clip>
        <VScroll>
          <Splitter />
          <ScrollBtn><Arrow dir="up" /></ScrollBtn>
          <VThumb />
          <Track />
          <ScrollBtn><Arrow dir="down" /></ScrollBtn>
        </VScroll>
      </SheetArea>

      <TabBar>
        <Nav>
          <svg viewBox="0 0 16 12"><path d="M5 2v8M11 2L7 6l4 4z" stroke="#111" fill="#111" /></svg>
          <svg viewBox="0 0 16 12"><path d="M10 2L6 6l4 4z" fill="#111" stroke="#111" /></svg>
          <svg viewBox="0 0 16 12"><path d="M6 2l4 4-4 4z" fill="#111" stroke="#111" /></svg>
          <svg viewBox="0 0 16 12"><path d="M11 2v8M5 2l4 4-4 4z" fill="#111" stroke="#111" /></svg>
        </Nav>
        <Tabs>
          {tabs.map((t, i) => (
            <Tab key={t.n} $w={t.w} $z={t.bold ? 50 : tabs.length - i}>
              <svg viewBox={`0 0 ${t.w} 16`} preserveAspectRatio="none">
                <path d={`M0 0L6 16L${t.w - 6} 16L${t.w} 0Z`} fill={t.f} />
                <path d={`M0 0L6 15.500L${t.w - 6} 15.500L${t.w} 0`} fill="none" stroke="#222" strokeWidth=".9" />
              </svg>
              <TabLabel $c={t.c} $bold={t.bold}>{t.n}</TabLabel>
            </Tab>
          ))}
        </Tabs>
        <HScroll>
          <ScrollBtn><Arrow dir="left" /></ScrollBtn>
          <Track $w={14} />
          <HThumb><i /></HThumb>
          <Track $w={47} />
          <ScrollBtn><Arrow dir="right" /></ScrollBtn>
          <HTail />
        </HScroll>
      </TabBar>

      <Dock $h={29}>
        <Toolbar $ml={2} $mt={2}>
          <Grip />
          <Label $ml={4} $w={27} $ls={-0.6}><>D<u>r</u>aw</></Label>
          <Drop />
          <Tool><Ico n="cursor" /></Tool>
          <Sep />
          <Label $ml={5} $w={59} $ls={-0.45}><>A<u>u</u>toShapes</></Label>
          <Drop />
          <Tool $w={23.5}><Ico n="line" /></Tool><Tool $w={23.5}><Ico n="arrow" /></Tool><Tool $w={23.5}><Ico n="rect" /></Tool><Tool $w={23.5}><Ico n="ellipse" /></Tool><Tool $w={23.5}><Ico n="textbox" /></Tool><Tool $w={23.5}><Ico n="wordart" /></Tool><Tool $w={23.5}><Ico n="diagram" /></Tool><Tool $w={23.5}><Ico n="clipart" /></Tool><Tool $w={23.5}><Ico n="picture" /></Tool>
          <Sep />
          <Tool><Ico n="fill" /></Tool><Drop $w={9} /><Tool><Ico n="linecolor" /></Tool><Drop $w={9} /><Tool><Ico n="fontcolor" /></Tool><Drop $w={9} />
          <Tool $w={23}><Ico n="linestyle" /></Tool><Tool $w={24}><Ico n="dash" /></Tool><Tool $w={23}><Ico n="arrows" /></Tool><Tool $w={23}><Ico n="shadow" /></Tool><Tool $w={23}><Ico n="threeD" /></Tool>
          <Chev />
        </Toolbar>
      </Dock>

      <StatusBar>
        <StatusText $w={116}>Ready</StatusText>
        <span>Calculate</span>
        <Panels>
          {[34, 111, 25, 29, 28, 29, 24, 22].map((w, i) => <Panel key={i} $w={w} />)}
        </Panels>
      </StatusBar>

      <Taskbar>
        <Seg $w={94} $c="#3f8b3f" />
        <Seg $w={883} $c="#245edc" />
        <Seg $w={46} $c="#8ed15e" $line />
        <Seg $w={50} $c="#245edc" />
        <Seg $c="#0f9eea" />
      </Taskbar>

      <Marks viewBox="0 0 1400 1024">
        {oval(187.5, 557, 156, 82)}
        {oval(452.5, 420, 100.5, 78.5)}
        {oval(759, 593, 150, 100)}
        <Bubble d={bubble(376, 542, 218, 132, 26, 440, 485, 412, 467)} />
        <Bubble d={bubble(220, 722, 314, 177, 28, 263, 632, 273, 350)} />
        <Bubble d={bubble(622, 722, 268, 166, 28, 725, 672, 665, 733)} />
      </Marks>
      <Note $x={387} $y={548}>{'This table, for example, allows\nrules that require separations\nbased on live virus to work when\nnew live virus vaccines are added\nto the system, such as the rota\nvirus vaccine.'}</Note>
      <Note $x={235} $y={729}>{"Many registries, schools and camps require\nretrospective analysis to be presented by\nindividual antigens, such as measles and\nmumps.  So those vaccines are flagged as 'yes'\nfor history.\n\nFor planning, however, pediatricians usually need\nto see which combo vaccine, in this case MMR,\nis needed next, so it has a 'yes' in planning."}</Note>
      <Note $x={635} $y={729}>{'The definitions of combinations allow the\nsystem to easily move between analysis\nand planning based on individual antigens\nor combination vaccines.\n\nVery little work, besides specifying that\nMMRV contains MMR and varicella, was\nneeded to add support for MMRV'}</Note>
    </Page>
  );
}
